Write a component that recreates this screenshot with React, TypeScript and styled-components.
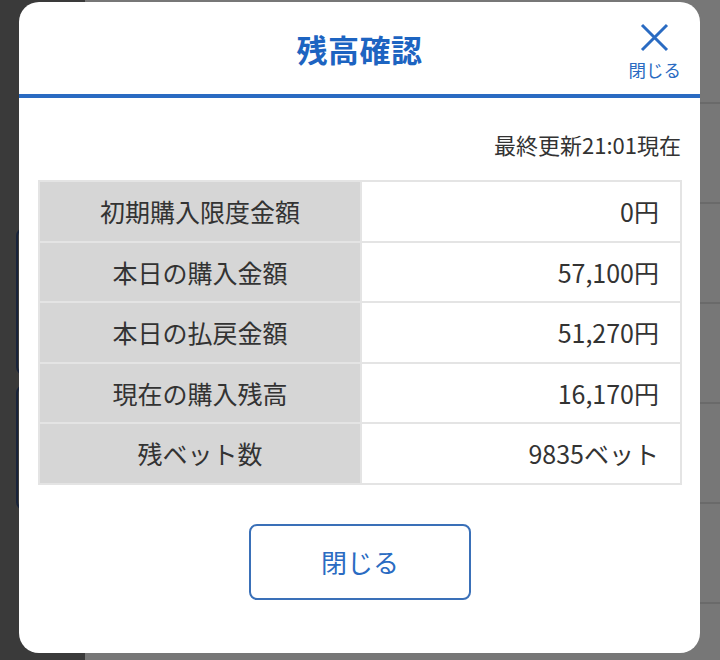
import React from "react";
import styled, { createGlobalStyle } from "styled-components";

const GlobalStyle = createGlobalStyle`
  html, body {
    margin: 0;
    padding: 0;
  }
  body {
    font-family: "Noto Sans CJK JP", "Noto Sans", sans-serif;
    background: #3a3a3a;
  }
`;

const Screen = styled.div`
  position: relative;
  width: 720px;
  height: 660px;
  overflow: hidden;
  display: flex;
`;

const Sidebar = styled.div`
  width: 85px;
  background: #3a3a3a;
  display: flex;
  flex-direction: column;
  gap: 10px;
  padding: 228px 0 0 16px;
  box-sizing: border-box;
`;

const SideCard = styled.div<{ h: number }>`
  width: 80px;
  height: ${(p) => p.h}px;
  border: 2px solid #18233a;
  border-radius: 8px;
  box-sizing: border-box;
`;

const Backdrop = styled.div`
  flex: 1;
  background: #777777;
  display: flex;
  flex-direction: column;
  padding-top: 4px;
`;

const BackRow = styled.div`
  height: 98px;
  border-bottom: 2px solid #6a6a6a;
  flex-shrink: 0;
`;

const Modal = styled.div`
  position: absolute;
  top: 2px;
  left: 19px;
  width: 681px;
  height: 651px;
  background: #ffffff;
  border-radius: 20px;
  display: flex;
  flex-direction: column;
  overflow: hidden;
`;

const Header = styled.div`
  height: 92px;
  border-bottom: 4px solid #2a6bc2;
  display: grid;
  grid-template-columns: 1fr auto 1fr;
  align-items: center;
  padding: 0 19px;
`;

const Title = styled.h1`
  grid-column: 2;
  margin: 0;
  font-size: 31px;
  font-weight: 700;
  color: #1d64c1;
  letter-spacing: 0.5px;
`;

const CloseIcon = styled.button`
  grid-column: 3;
  justify-self: end;
  background: none;
  border: none;
  padding: 0;
  display: flex;
  flex-direction: column;
  align-items: center;
  gap: 8px;
  color: #2a6bc2;
  font-family: inherit;
  font-size: 17.5px;
  line-height: 20px;
  margin-top: 6px;
  cursor: pointer;
`;

const Body = styled.div`
  padding: 31px 18px 0 19px;
  display: flex;
  flex-direction: column;
`;

const Updated = styled.div`
  text-align: right;
  font-size: 22px;
  line-height: 30px;
  color: #333333;
  padding-right: 1px;
`;

const Table = styled.table`
  margin-top: 21px;
  width: 644px;
  border-collapse: collapse;
  border: 2px solid #e4e4e4;
`;

const Label = styled.th`
  width: 320px;
  height: 58.5px;
  padding: 0;
  background: #d6d6d6;
  border: 2px solid #e4e4e4;
  font-weight: 400;
  font-size: 25px;
  line-height: 30px;
  color: #333333;
  text-align: center;
`;

const Value = styled.td`
  padding: 0 21px 0 0;
  border: 2px solid #e4e4e4;
  font-size: 25px;
  line-height: 30px;
  color: #333333;
  text-align: right;
`;

const CloseButton = styled.button`
  margin: 39px auto 0;
  width: 222px;
  height: 76px;
  background: #ffffff;
  border: 2px solid #3a70b8;
  border-radius: 8px;
  color: #2a6bc2;
  font-family: inherit;
  font-size: 26px;
  cursor: pointer;
`;

const rows = [
  { label: "初期購入限度金額", value: "0円" },
  { label: "本日の購入金額", value: "57,100円" },
  { label: "本日の払戻金額", value: "51,270円" },
  { label: "現在の購入残高", value: "16,170円" },
  { label: "残ベット数", value: "9835ベット" },
];

export default function App() {
  return (
    <>
      <GlobalStyle />
      <Screen>
        <Sidebar>
          <SideCard h={147} />
          <SideCard h={125} />
        </Sidebar>
        <Backdrop>
          {[0, 1, 2, 3, 4, 5].map((i) => (
            <BackRow key={i} />
          ))}
        </Backdrop>
        <Modal>
          <Header>
            <Title>残高確認</Title>
            <CloseIcon>
              <svg width="29" height="29" viewBox="0 0 29 29" fill="none">
                <path d="M2 2 L27 27 M27 2 L2 27" stroke="#2a6bc2" strokeWidth="3" />
              </svg>
              閉じる
            </CloseIcon>
          </Header>
          <Body>
            <Updated>最終更新21:01現在</Updated>
            <Table>
              <tbody>
                {rows.map((r) => (
                  <tr key={r.label}>
                    <Label>{r.label}</Label>
                    <Value>{r.value}</Value>
                  </tr>
                ))}
              </tbody>
            </Table>
            <CloseButton>閉じる</CloseButton>
          </Body>
        </Modal>
      </Screen>
    </>
  );
}
